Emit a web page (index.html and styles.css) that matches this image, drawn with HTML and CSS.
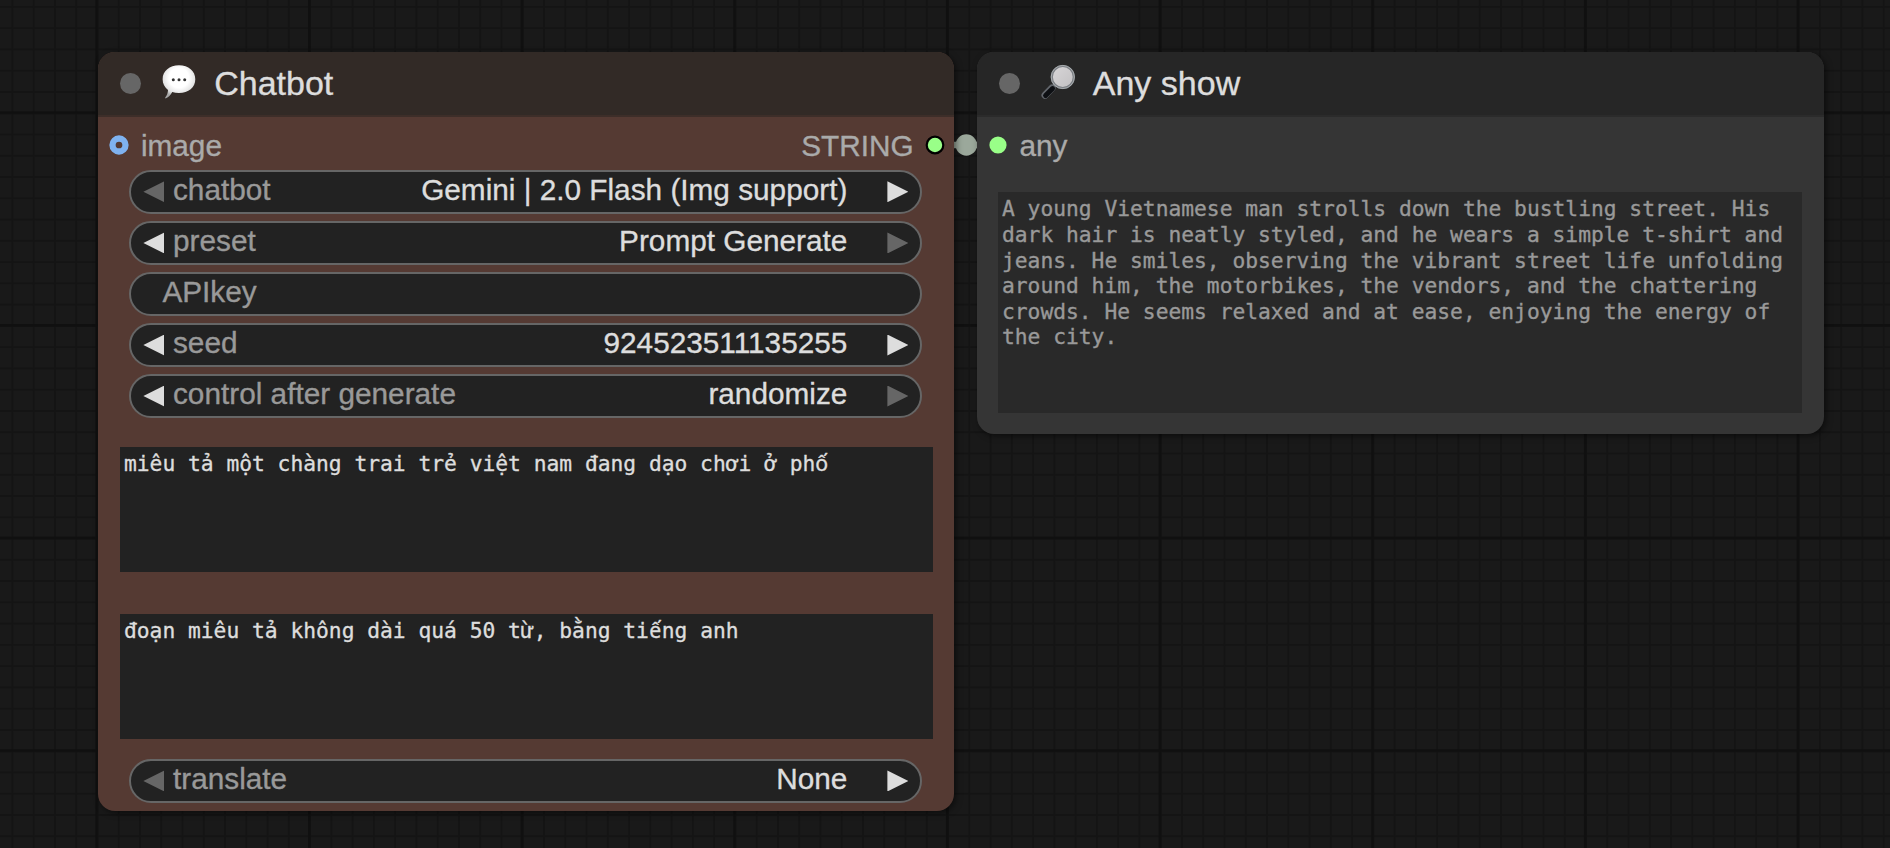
FILE: index.html
```html
<!DOCTYPE html>
<html lang="en">
<head>
<meta charset="utf-8">
<title>Node graph</title>
<link rel="stylesheet" href="styles.css">
</head>
<body>
<main class="canvas">
  <svg class="grid" width="1890" height="848">
    <defs>
      <pattern id="minor" x="11.43" y="5.95" width="21.265" height="21.265" patternUnits="userSpaceOnUse">
        <rect width="2" height="21.265" fill="#141414"/><rect width="21.265" height="2" fill="#141414"/>
      </pattern>
      <pattern id="major" x="95.3" y="111.3" width="212.65" height="212.65" patternUnits="userSpaceOnUse">
        <rect width="2.800" height="212.65" fill="#101010"/><rect width="212.65" height="2.800" fill="#101010"/>
      </pattern>
    </defs>
    <rect width="1890" height="848" fill="url(#minor)"/>
    <rect width="1890" height="848" fill="url(#major)"/>
  </svg>
  <svg class="link" width="60" height="30" viewBox="0 0 60 30">
    <path d="M0 15H60" stroke="#9ba89b" stroke-width="6.4"/>
    <circle cx="26.3" cy="15" r="10.7" fill="#9ba89b"/>
  </svg>

  <section class="node chatbot">
    <header class="title">
      <i class="dot"></i>
      <svg class="emoji" viewBox="0 0 36 36" width="36" height="36">
        <defs><radialGradient id="bubble" cx=".5" cy=".38" r=".6"><stop offset=".5" stop-color="#fff"/><stop offset=".8" stop-color="#e4e4e4"/><stop offset="1" stop-color="#a6a6a6"/></radialGradient></defs>
        <path d="M18 1.200C27.500 1.200 34.300 7 34.300 15.200C34.300 23.500 27.500 29 18 29C15.500 29 13.200 28.700 11.200 28.100C9.500 31.200 7.500 33.400 5 34.300C4.200 34.600 3.900 34 4.400 33.300C6 31.200 6.900 28.600 7 25.900C3.600 23.400 1.600 19.700 1.600 15.200C1.600 7 8.500 1.200 18 1.200Z" fill="url(#bubble)"/>
        <circle cx="12.300" cy="15.800" r="1.500" fill="#333"/><circle cx="18" cy="15.800" r="1.500" fill="#333"/><circle cx="23.700" cy="15.800" r="1.500" fill="#333"/>
      </svg>
      <span class="name">Chatbot</span>
    </header>
    <div class="slots">
      <svg class="port" width="20" height="20"><circle cx="10" cy="10" r="6.500" fill="none" stroke="#7fb2f0" stroke-width="6.300"/></svg>
      <span class="slot-in">image</span>
      <span class="slot-out">STRING</span>
      <svg class="port" width="20" height="20"><circle cx="10" cy="10" r="8.300" fill="#99ff88" stroke="#000" stroke-width="2.200"/></svg>
    </div>
    <div class="widgets">
      <div class="widget"><i class="prev off"></i><span class="label">chatbot</span><span class="value">Gemini | 2.0 Flash (Img support)</span><i class="next"></i></div>
      <div class="widget"><i class="prev"></i><span class="label">preset</span><span class="value">Prompt Generate</span><i class="next off"></i></div>
      <div class="widget text"><span class="label">APIkey</span></div>
      <div class="widget"><i class="prev"></i><span class="label">seed</span><span class="value">924523511135255</span><i class="next"></i></div>
      <div class="widget"><i class="prev"></i><span class="label">control after generate</span><span class="value">randomize</span><i class="next off"></i></div>
    </div>
    <div class="area prompt">miêu tả một chàng trai trẻ việt nam đang dạo chơi ở ph<span class="stacked">&#7889;</span></div>
    <div class="area rule">đoạn miêu tả không dài quá 50 từ, bằng ti<span class="stacked">&#7871;</span>ng anh</div>
    <div class="widgets last">
      <div class="widget"><i class="prev off"></i><span class="label">translate</span><span class="value">None</span><i class="next"></i></div>
    </div>
  </section>

  <section class="node show">
    <header class="title">
      <i class="dot"></i>
      <svg class="emoji" viewBox="0 0 36 36" width="36" height="36">
        <defs><linearGradient id="lens" x1="0" y1="0" x2="1" y2="1"><stop offset="0" stop-color="#d8d6d8"/><stop offset="1" stop-color="#c2c0c2"/></linearGradient></defs>
        <path d="M16 20L11.500 24.200" stroke="#8b8f94" stroke-width="3.200"/>
        <path d="M12 24L5 31.200" stroke="#62666c" stroke-width="7" stroke-linecap="round"/>
        <path d="M12.600 24.600L5.600 31.600" stroke="#0d0f13" stroke-width="5" stroke-linecap="round"/>
        <circle cx="22.800" cy="13" r="11" fill="url(#lens)" stroke="#7c8085" stroke-width="2.200"/>
        <circle cx="22.800" cy="13" r="11.600" fill="none" stroke="#b4b7ba" stroke-width=".8"/>
      </svg>
      <span class="name">Any show</span>
    </header>
    <div class="slots">
      <svg class="port" width="20" height="20"><circle cx="10" cy="10" r="8.600" fill="#99ff88"/></svg>
      <span class="slot-in">any</span>
    </div>
    <div class="area output">A young Vietnamese man strolls down the bustling street. His dark hair is neatly styled, and he wears a simple t-shirt and jeans. He smiles, observing the vibrant street life unfolding around him, the motorbikes, the vendors, and the chattering crowds. He seems relaxed and at ease, enjoying the energy of the city.</div>
  </section>
</main>
</body>
</html>
```
FILE: styles.css
```css
* { box-sizing: border-box; }
body { margin: 0; background: #191919; }
.canvas {
  position: relative;
  width: 1890px;
  height: 848px;
  overflow: hidden;
  background: #191919;
  font-family: "Liberation Sans", Arial, sans-serif;
  -webkit-text-stroke: .35px currentColor;
}
.grid { display: block; }
.link { position: absolute; left: 940px; top: 130px; }

.node {
  position: absolute;
  top: 51.700px;
  display: flex;
  flex-direction: column;
  border-radius: 17px;
  overflow: hidden;
  box-shadow: 2px 2px 6px rgba(0, 0, 0, .5);
}
.chatbot { left: 98.400px; width: 855.300px; height: 759.300px; background: #553a33; }
.show { left: 977px; width: 847px; height: 382.700px; background: #353535; }

.title {
  display: flex;
  align-items: center;
  flex: none;
  height: 65px;
  padding: 1px 0 0 21.500px;
  border-bottom: 2px solid #3d2e29;
  background: #322a26;
}
.show .title { background: #262626; border-bottom-color: #2b2b2b; }
.dot { width: 21.300px; height: 21.300px; border-radius: 50%; background: #666; }
.emoji { margin-left: 20.300px; margin-top: -4px; }
.name { margin-left: 16.700px; margin-top: -2px; font-size: 34px; line-height: 60px; color: #ddd; }

.slots { display: flex; align-items: center; flex: none; height: 36px; margin-top: 10.500px; padding: 0 9px 0 11px; }
.port { flex: none; }
.slot-in { margin-left: 11.500px; }
.slot-out { margin-left: auto; margin-right: 11px; }
.slots span { font-size: 29.780px; line-height: 36px; padding-top: 2px; color: #aaa; }

.widgets { display: flex; flex-direction: column; gap: 6.770px; margin: 6.500px 31.300px 0 31px; }
.widget {
  display: flex;
  align-items: center;
  height: 44.300px;
  padding: 0 12px;
  border: 2px solid #666;
  border-radius: 22.150px;
  background: #222;
  font-size: 29.780px;
}
.label { margin-left: 8.600px; color: #999; }
.value { margin-left: auto; margin-right: 40px; color: #ddd; }
.widget span { line-height: 36px; padding-bottom: 3.500px; }
.text .label { margin-left: 19px; }
.prev, .next { width: 21px; height: 21px; background: #ddd; }
.prev { clip-path: polygon(0 50%, 100% 0, 100% 100%); }
.next { clip-path: polygon(0 0, 100% 50%, 0 100%); }
.off { background: #666; }

.area {
  flex: none;
  margin: 0 20.700px 0 21.600px;
  padding: 4px 4px 0;
  font-family: "DejaVu Sans Mono", monospace;
  font-size: 21.270px;
  line-height: 25.600px;
  color: #ddd;
  background: #222;
}
.stacked {
  display: inline-block;
  width: 12.800px;
  text-align: center;
  font-family: "Noto Sans", sans-serif;
  line-height: 20px;
}
.prompt { height: 124.300px; margin-top: 29px; }
.rule { height: 124.300px; margin-top: 42.700px; }
.last { margin-top: 20.300px; }
.output { height: 221px; margin: 29.300px 22px 0 21px; color: #999; background: #292929; }
```
